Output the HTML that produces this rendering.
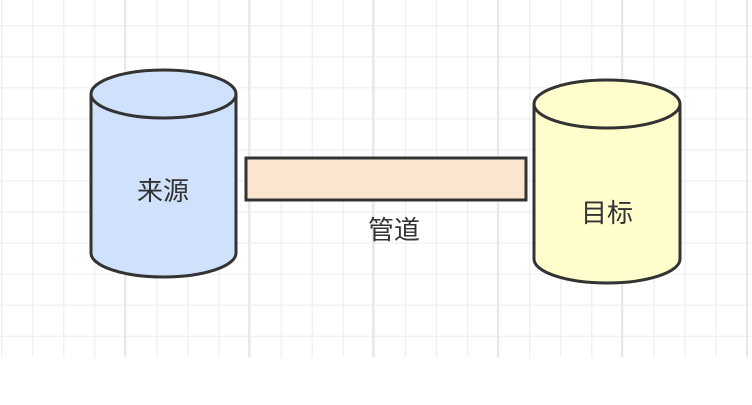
<!DOCTYPE html>
<html><head><meta charset="utf-8"><style>
html,body{margin:0;padding:0;background:#fff;width:752px;height:405px;overflow:hidden}
</style></head><body>
<svg width="752" height="405" xmlns="http://www.w3.org/2000/svg">
<defs>
<pattern id="g" x="1" y="-6" width="31.06" height="31.06" patternUnits="userSpaceOnUse">
<path d="M0 0V31.06M0 0H31.06" stroke="#efefef" stroke-width="2.5" fill="none"/>
</pattern>
</defs>
<rect x="0" y="0" width="752" height="357" fill="url(#g)"/>
<g stroke="#e8e8e8" stroke-width="2">
<line x1="125" y1="0" x2="125" y2="357"/><line x1="249" y1="0" x2="249" y2="357"/>
<line x1="373" y1="0" x2="373" y2="357"/><line x1="498" y1="0" x2="498" y2="357"/>
<line x1="622" y1="0" x2="622" y2="357"/><line x1="747" y1="0" x2="747" y2="357"/>
</g>
<g stroke="#333" stroke-width="3">
<path d="M91 94 V253 A72.5 24 0 0 0 236 253 V94" fill="#d0e2fb"/>
<ellipse cx="163.5" cy="94" rx="72.5" ry="24" fill="#d0e2fb"/>
<path d="M534 104 V259 A73 24 0 0 0 680 259 V104" fill="#fffdcc"/>
<ellipse cx="607" cy="104" rx="73" ry="24" fill="#fffdcc"/>
<rect x="246" y="158" width="280" height="42" fill="#fbe5cf"/>
</g>
<g font-family="Liberation Sans, Noto Sans CJK SC, sans-serif" font-size="26" fill="#333" text-anchor="middle">
<text x="163" y="200">来源</text>
<text x="607" y="222">目标</text>
<text x="394" y="239">管道</text>
</g>
</svg>
</body></html>
